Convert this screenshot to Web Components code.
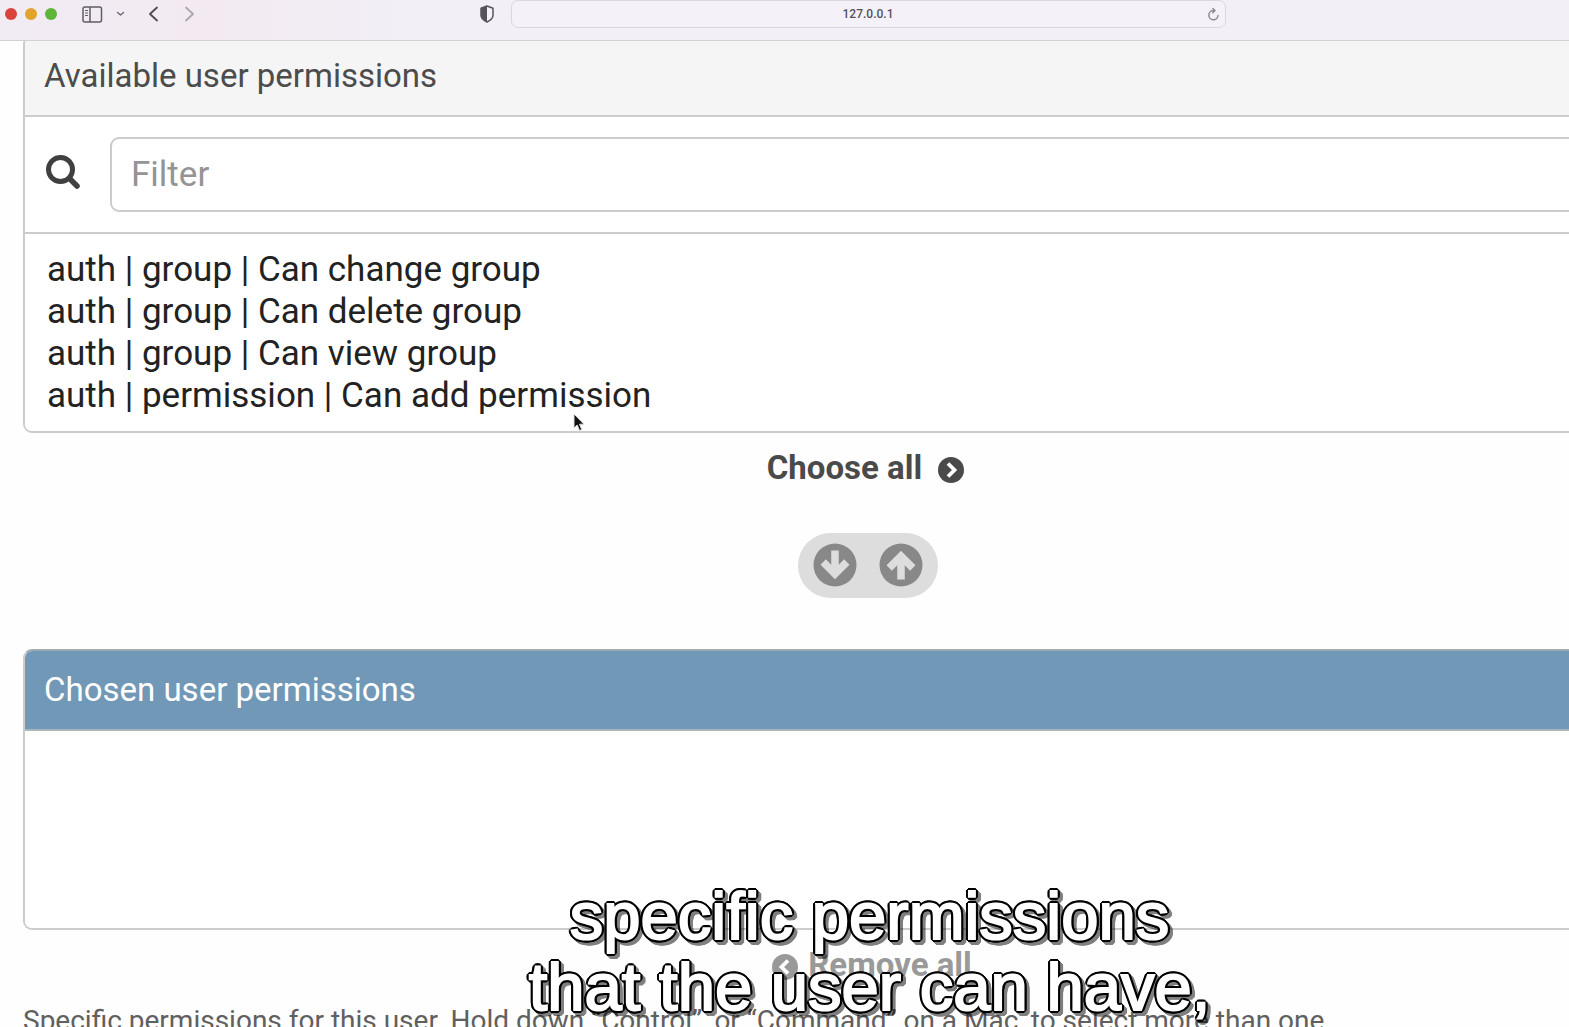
<!DOCTYPE html>
<html lang="en">
<head>
<meta charset="utf-8">
<title>Change user</title>
<style>
  html, body { margin: 0; height: 100%; overflow: hidden; background: #fefefe; }
  body { font-family: Roboto, "Liberation Sans", sans-serif; color: #444; }
</style>
</head>
<body>
<app-stage>
  <browser-bar address="127.0.0.1"></browser-bar>
  <permission-selector></permission-selector>
  <video-caption slot="overlay"><span>specific permissions</span><span>that the user can have,</span></video-caption>
</app-stage>
<script>
const define = (name, html, setup) => customElements.define(name, class extends HTMLElement {
  constructor() {
    super();
    this.attachShadow({ mode: "open" }).innerHTML = html;
  }
  connectedCallback() { if (setup) setup(this, this.shadowRoot); }
});

/* The stage is wider than the window; its right part runs out of view. */
define("app-stage", `
<style>
  :host { display: block; position: relative; width: calc(100% + 168px); height: 100vh; overflow: hidden; }
  .cursor { position: absolute; left: 573px; top: 413px; width: 12px; height: 19px; }
</style>
<slot></slot>
<svg class="cursor" viewBox="0 0 12 19" aria-hidden="true"><path d="M1 1v14l3.200-3 2.300 5.500 2.300-1-2.300-5.300H11z" fill="#111" stroke="#ddd" stroke-width="1"/></svg>
<slot name="overlay"></slot>`);

define("browser-bar", `
<style>
  :host { display: grid; grid-template-columns: 1fr minmax(0, 715px) 1fr; height: 40px; align-items: start;
    position: relative; z-index: 1; border-bottom: 1px solid #d2d1d5;
    background: linear-gradient(90deg, #f1ebf3, #f3eaf1 12%, #f2eff6 24%, #f2eff6); }
  .left { display: flex; align-items: center; height: 28px; padding: 0 16px 0 5px; }
  .lights { display: flex; gap: 8px; margin-right: 25px; }
  i { width: 12px; height: 12px; border-radius: 50%; background: #d8433d; }
  i:nth-child(2) { background: #e2a32c; }
  i:nth-child(3) { background: #5db53a; }
  button { display: flex; padding: 0; border: 0; background: none; }
  svg { display: block; }
  .menu { margin-left: 13px; }
  .back { margin-left: 21px; }
  .next { margin-left: 25px; }
  .shield { margin-left: auto; }
  .url { display: flex; align-items: center; box-sizing: border-box; height: 28px; padding-right: 5px;
    border: 1px solid #dbd7df; border-radius: 7px; background: #f4f1f8; }
  input { flex: 1; min-width: 0; border: 0; padding: 0 0 0 17px; background: none; outline: 0;
    font: 500 12px/16px Roboto, sans-serif; color: #55525a; text-align: center; }
</style>
<div class="left">
  <span class="lights"><i></i><i></i><i></i></span>
  <button aria-label="Sidebar"><svg width="21" height="17" viewBox="0 0 21 17" fill="none" stroke="#625e66" stroke-width="1.500"><rect x="1" y="1" width="18.500" height="15" rx="2"/><path d="M8 1v15"/><path d="M3 4.500h3M3 7h3M3 9.500h3" stroke-width="1"/></svg></button>
  <button class="menu" aria-label="Tab groups"><svg width="9" height="6" viewBox="0 0 9 6" fill="none" stroke="#6d6971" stroke-width="1.500" stroke-linecap="round" stroke-linejoin="round"><path d="M1.500 1.500l3 2.500 3-2.500"/></svg></button>
  <button class="back" aria-label="Back"><svg width="13" height="16" viewBox="0 0 13 16" fill="none" stroke="#4d4951" stroke-width="1.800" stroke-linecap="round" stroke-linejoin="round"><path d="M11 1.500L4 8l7 6.500"/></svg></button>
  <button class="next" aria-label="Forward"><svg width="13" height="16" viewBox="0 0 13 16" fill="none" stroke="#aaa6ae" stroke-width="1.800" stroke-linecap="round" stroke-linejoin="round"><path d="M2 1.500L9 8l-7 6.500"/></svg></button>
  <button class="shield" aria-label="Privacy report"><svg width="16" height="18" viewBox="0 0 16 18"><path d="M8 1l6 2.200v7C14 13.500 11 15.500 8 17 5 15.500 2 13.500 2 10.200v-7z" fill="#f4f1f8" stroke="#57535b" stroke-width="1.500" stroke-linejoin="round"/><path d="M8 1v16C5 15.500 2 13.500 2 10.200v-7z" fill="#57535b"/></svg></button>
</div>
<div class="url">
  <input aria-label="Address">
  <button aria-label="Reload"><svg width="13" height="14" viewBox="0 0 13 14" fill="none" stroke="#8d8991" stroke-width="1.500" stroke-linecap="round" stroke-linejoin="round"><path d="M11 8.500a4.600 4.600 0 1 1-4.500-5h1M5.800 1.500l2.200 2-2.200 2.200"/></svg></button>
</div>`, (el, root) => { root.querySelector("input").value = el.getAttribute("address"); });

define("permission-panel", `
<style>
  :host { display: block; border: 2px solid #ccc; border-radius: 9px; overflow: hidden; background: #fff; }
  h2 { margin: 0; padding: 19px; border-bottom: 2px solid #ccc; background: #f5f5f5;
    font-size: 33px; line-height: 40px; font-weight: 400; color: #4c4c4c; }
  :host([chosen]) { border-top-color: #9fabb0; }
  :host([chosen]) h2 { background: #7298b7; color: #fff; border-bottom-color: #aab6be; }
</style>
<h2><slot name="title"></slot></h2>
<slot></slot>`);

define("permission-filter", `
<style>
  :host { display: flex; align-items: center; padding: 20px; border-bottom: 2px solid #ccc; }
  label { display: flex; width: 65px; padding-bottom: 5px; }
  input { flex: 1; min-width: 0; box-sizing: border-box; height: 75px; padding: 0 19px; border: 2px solid #ccc;
    border-radius: 9px; background: #fff; outline: 0; font: 35px/42px Roboto, sans-serif; color: #222; }
  input::placeholder { color: #949494; opacity: 1; }
</style>
<label for="filter" aria-label="Filter"><svg width="36" height="36" viewBox="0 0 36 36" fill="none" stroke="#404040"><circle cx="15.500" cy="15.500" r="12" stroke-width="5"/><path d="M24.500 24.500l7.500 7.500" stroke-width="5.500" stroke-linecap="round"/></svg></label>
<input id="filter" type="text" placeholder="Filter">`);

define("permission-list", `
<style>
  :host { display: block; }
  select { display: block; box-sizing: border-box; width: 100%; height: 197px; padding: 15px 22px 14px; margin: 0;
    border: 0; border-radius: 0; outline: 0; background: #fff; overflow: hidden; appearance: none; scrollbar-width: none;
    font: 35px/42px Roboto, sans-serif; color: #222; }
  option { padding: 0; min-height: 42px; line-height: 42px; }
</style>
<select multiple></select>`, (el, root) => {
  const select = root.querySelector("select");
  select.setAttribute("aria-label", el.getAttribute("label"));
  select.replaceChildren(...(el.getAttribute("items") || "").split(";").filter(Boolean).map(t => new Option(t)));
});

define("bulk-link", `
<style>
  :host { display: flex; justify-content: center; }
  a { display: flex; align-items: center; gap: 16px; font-size: 33px; line-height: 40px; font-weight: 700;
    color: #4a4a4a; text-decoration: none; }
  svg { display: block; margin-top: 4px; }
  .prev { display: none; }
  :host(:not([remove])) a { padding-right: 5px; }
  :host([remove]) a { color: #999; gap: 10px; padding-left: 8px; }
  :host([remove]) .prev { display: block; }
  :host([remove]) .next { display: none; }
</style>
<a href="#">
  <svg class="prev" width="26" height="26" viewBox="0 0 26 26"><circle cx="13" cy="13" r="13" fill="currentColor"/><path d="M16 6.500L9.500 13l6.500 6.500" fill="none" stroke="#fff" stroke-width="3.800"/></svg>
  <slot></slot>
  <svg class="next" width="26" height="26" viewBox="0 0 26 26"><circle cx="13" cy="13" r="13" fill="currentColor"/><path d="M10 6.500l6.500 6.500-6.500 6.500" fill="none" stroke="#fff" stroke-width="3.800"/></svg>
</a>`);

define("move-buttons", `
<style>
  :host { display: flex; justify-content: center; }
  div { display: flex; gap: 22px; padding: 10px 15px 11px; border-radius: 33px; background: #ddd; }
  button { display: block; padding: 0; border: 0; background: none; }
  svg { display: block; }
</style>
<div>
  <button aria-label="Choose"><svg width="44" height="44" viewBox="0 0 44 44"><circle cx="22" cy="22" r="21.500" fill="#888"/><path d="M22 7.500v22M10.200 19L22 31l11.800-12" fill="none" stroke="#ddd" stroke-width="7.500"/></svg></button>
  <button aria-label="Remove"><svg width="44" height="44" viewBox="0 0 44 44"><circle cx="22" cy="22" r="21.500" fill="#888"/><path d="M22 36.500v-22M10.200 25L22 13l11.800 12" fill="none" stroke="#ddd" stroke-width="7.500"/></svg></button>
</div>`);

define("permission-selector", `
<style>
  /* scrolled so that the first panel's top edge is under the browser bar */
  :host { display: block; margin-top: -6px; padding: 0 24px 0 23px; }
  bulk-link { margin-top: 15px; }
  move-buttons { margin: 45px 0 51px; }
  p { margin: 18px 0 0; font-size: 28px; line-height: 36px; color: #606060; white-space: nowrap; }
</style>
<permission-panel>
  <span slot="title">Available user permissions</span>
  <permission-filter></permission-filter>
  <permission-list label="Available user permissions" items="auth | group | Can change group;auth | group | Can delete group;auth | group | Can view group;auth | permission | Can add permission"></permission-list>
</permission-panel>
<bulk-link>Choose all</bulk-link>
<move-buttons></move-buttons>
<permission-panel chosen>
  <span slot="title">Chosen user permissions</span>
  <permission-list label="Chosen user permissions"></permission-list>
</permission-panel>
<bulk-link remove>Remove all</bulk-link>
<p>Specific permissions for this user. Hold down “Control”, or “Command” on a Mac, to select more than one</p>`);

define("video-caption", `
<style>
  :host { display: flex; flex-direction: column; align-items: center; position: absolute; left: 0; right: 0; bottom: 5px;
    padding-left: 2px;
    font: 67px/71px "Liberation Sans", Arial, sans-serif; color: #fff; -webkit-text-stroke: 2px #fff;
    text-shadow: 3px 0 #000, -3px 0 #000, 0 3px #000, 0 -3px #000, 3px 1px #000, 3px -1px #000, -3px 1px #000, -3px -1px #000,
      1px 3px #000, -1px 3px #000, 1px -3px #000, -1px -3px #000, 2px 2px #000, -2px 2px #000, 2px -2px #000, -2px -2px #000;
    filter: drop-shadow(3px 3px 0 rgba(0, 0, 0, .5)); pointer-events: none; }
</style>
<slot></slot>`);
</script>
</body>
</html>
